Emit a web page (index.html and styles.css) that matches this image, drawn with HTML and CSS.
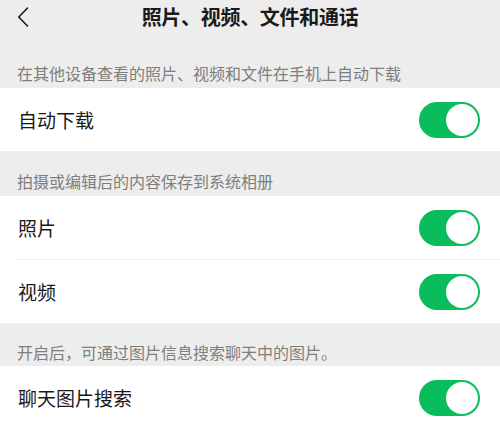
FILE: index.html
```html
<!DOCTYPE html>
<html lang="zh-CN">
<head>
<meta charset="utf-8">
<title>照片、视频、文件和通话</title>
<link rel="stylesheet" href="styles.css">
</head>
<body>
<header class="nav">
  <span class="back">
    <svg width="12" height="20" viewBox="0 0 12 20"><path d="M10.5 1 L1.8 10 L10.5 19" fill="none" stroke="#1a1a1a" stroke-width="1.6" stroke-linecap="round" stroke-linejoin="round"/></svg>
  </span>
  <h1 class="title">照片、视频、文件和通话</h1>
</header>

<div class="label label-first">在其他设备查看的照片、视频和文件在手机上自动下载</div>
<section class="group">
  <div class="row"><span class="row-text">自动下载</span><span class="switch"></span></div>
</section>

<div class="label">拍摄或编辑后的内容保存到系统相册</div>
<section class="group">
  <div class="row"><span class="row-text">照片</span><span class="switch"></span></div>
  <div class="row row-sep"><span class="row-text">视频</span><span class="switch"></span></div>
</section>

<div class="label label-last">开启后，可通过图片信息搜索聊天中的图片。</div>
<section class="group">
  <div class="row"><span class="row-text">聊天图片搜索</span><span class="switch"></span></div>
</section>
</body>
</html>
```

FILE: styles.css
```css
html, body {
  margin: 0;
  padding: 0;
}
body {
  background: #ededed;
  font-family: "Noto Sans CJK SC", "Noto Sans", sans-serif;
  color: #1a1a1a;
  width: 500px;
  height: 429px;
  overflow: hidden;
}
.nav {
  height: 44px;
  display: flex;
  align-items: flex-start;
  justify-content: center;
  position: relative;
}
.back {
  position: absolute;
  left: 17px;
  top: 7px;
  display: flex;
}
.title {
  margin: 0;
  font-size: 20px;
  font-weight: 700;
  line-height: 34px;
  color: #1a1a1a;
  letter-spacing: -0.3px;
}
.label {
  font-size: 16px;
  line-height: 20px;
  color: #7e7e7e;
  padding: 20px 17px 5px;
}
.label-first {
  padding-top: 19px;
  padding-bottom: 5px;
}
.label-last {
  padding-top: 19px;
  padding-bottom: 4px;
}
.group {
  background: #ffffff;
}
.row {
  height: 63px;
  display: flex;
  align-items: center;
  justify-content: space-between;
  padding: 0 20px 0 18px;
}
.row-sep {
  border-top: 1px solid #efefef;
  margin-left: 16px;
  padding-left: 2px;
}
.row-text {
  font-size: 19px;
}
.switch {
  width: 61px;
  height: 36px;
  border-radius: 18px;
  background: #0abd5c;
  position: relative;
}
.switch::after {
  content: "";
  position: absolute;
  right: 2px;
  top: 2px;
  width: 32px;
  height: 32px;
  border-radius: 50%;
  background: #ffffff;
}
```
